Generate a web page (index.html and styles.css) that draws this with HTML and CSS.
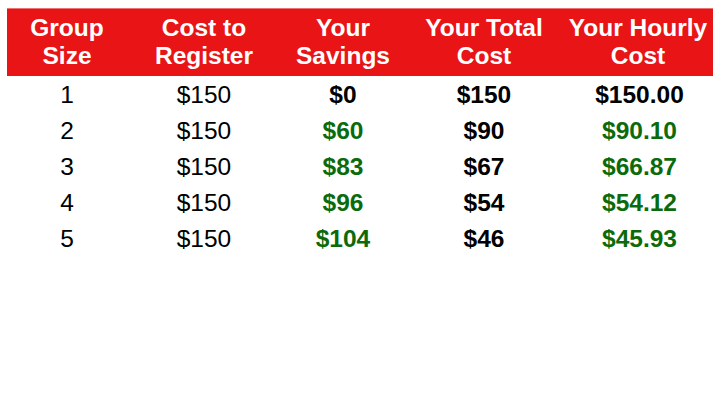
FILE: index.html
```html
<!DOCTYPE html>
<html>
<head>
<meta charset="utf-8">
<link rel="stylesheet" href="styles.css">
</head>
<body>
<div class="page">
<table class="costs">
  <colgroup>
    <col class="c1"><col class="c2"><col class="c3"><col class="c4"><col class="c5">
  </colgroup>
  <thead>
    <tr>
      <th>Group<br>Size</th>
      <th>Cost to<br>Register</th>
      <th>Your<br>Savings</th>
      <th>Your Total<br>Cost</th>
      <th>Your Hourly<br>Cost</th>
    </tr>
  </thead>
  <tbody>
    <tr><td>1</td><td>$150</td><td class="b">$0</td><td class="b">$150</td><td class="b">$150.00</td></tr>
    <tr><td>2</td><td>$150</td><td class="b g">$60</td><td class="b">$90</td><td class="b g">$90.10</td></tr>
    <tr><td>3</td><td>$150</td><td class="b g">$83</td><td class="b">$67</td><td class="b g">$66.87</td></tr>
    <tr><td>4</td><td>$150</td><td class="b g">$96</td><td class="b">$54</td><td class="b g">$54.12</td></tr>
    <tr><td>5</td><td>$150</td><td class="b g">$104</td><td class="b">$46</td><td class="b g">$45.93</td></tr>
  </tbody>
</table>
</div>
</body>
</html>
```
FILE: styles.css
```css
html, body {
  margin: 0;
  padding: 0;
  background: #ffffff;
}
.page {
  width: 720px;
  height: 400px;
  padding: 8px 7px 0 7px;
  box-sizing: border-box;
  font-family: "Liberation Sans", Arial, sans-serif;
}
.costs {
  width: 706px;
  border-collapse: collapse;
  table-layout: fixed;
}
.c1 { width: 120px; }
.c2 { width: 154px; }
.c3 { width: 124px; }
.c4 { width: 158px; }
.c5 { width: 150px; }
.costs th {
  background: #e81416;
  color: #ffffff;
  font-weight: bold;
  font-size: 24.5px;
  line-height: 28px;
  padding: 5px 0 6px 0;
  text-align: center;
  border-top: 1px solid #f07070;
}
.costs td {
  font-size: 24.5px;
  line-height: 36px;
  height: 36px;
  padding: 0;
  text-align: center;
  color: #000000;
}
.costs tbody tr:first-child td {
  padding-top: 1px;
}
.costs td.b { font-weight: bold; }
.costs td.g { color: #0b6b0b; }
.costs td:last-child { padding-left: 3px; }
```
